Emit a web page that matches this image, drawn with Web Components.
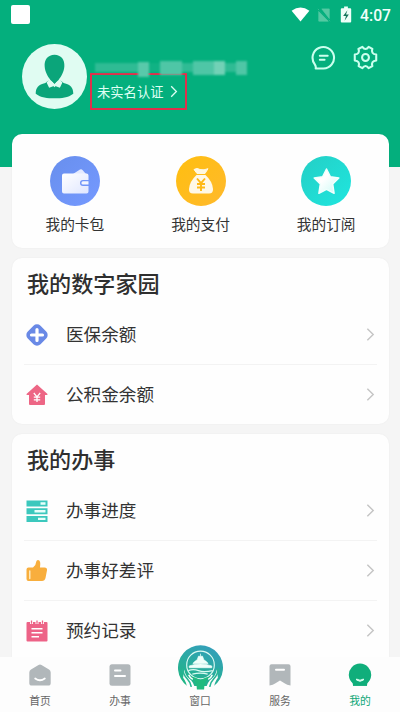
<!DOCTYPE html>
<html lang="zh-CN">
<head>
<meta charset="utf-8">
<title>我的</title>
<style>
html,body{margin:0;height:712px;overflow:hidden;background:#f5f5f5}
body{font-family:"Noto Sans CJK SC","Noto Sans",sans-serif;color:#333}
</style>
</head>
<body>
<my-app></my-app>
<script>
const define = (name, html) => customElements.define(name, class extends HTMLElement {
  constructor() {
    super();
    const t = document.createElement('template');
    t.innerHTML = html;
    this.attachShadow({mode: 'open'}).append(t.content.cloneNode(true));
  }
});

const icons = {
  wallet: ['0 0 50 50', `<defs><linearGradient id="a" x2="1" y2="1"><stop stop-color="#688fed"/><stop offset="1" stop-color="#7599ff"/></linearGradient><linearGradient id="b" x2="1" y2="1"><stop stop-color="#fff"/><stop offset="1" stop-color="#dfe6ff"/></linearGradient></defs><circle cx="25" cy="25" r="25" fill="url(#a)"/><path d="M23 18l7-4.500q1.500-.8 2.500.5l3.500 4z" fill="#e4eaff"/><path d="M14 17.500h22.500a2 2 0 0 1 2 2V24H33a3 3 0 0 0 0 6h5.500v5.500a2 2 0 0 1-2 2H14a2 2 0 0 1-2-2v-16a2 2 0 0 1 2-2z" fill="url(#b)"/><path d="M33 25.300h5.500v3.200H33a1.600 1.600 0 0 1 0-3.200z" fill="#f4f6ff"/>`],
  money: ['0 0 50 50', `<defs><linearGradient id="a" x2="1" y2="1"><stop stop-color="#ffbf10"/><stop offset="1" stop-color="#ffb92c"/></linearGradient></defs><circle cx="25" cy="25" r="25" fill="url(#a)"/><path d="M18 13.500q3-2 6 0 4 1 8-.8l-3 4.800h-8z" fill="#fff8e2" stroke="#fff8e2" stroke-linejoin="round"/><path d="M20.500 19h9q7 6.500 7.500 14 .2 4.500-4 4.500H17q-4.200 0-4-4.500.5-7.500 7.500-14z" fill="#fff8e8"/><path d="M21 22.500l4 4.700 4-4.700M25 27.200V35M21 28h8M21 31.500h8" fill="none" stroke="#ffb916" stroke-width="1.900"/>`],
  star: ['0 0 50 50', `<defs><linearGradient id="a" x2="1" y2="1"><stop stop-color="#24cfc5"/><stop offset="1" stop-color="#1fe6df"/></linearGradient><linearGradient id="b" x2="1" y2="1"><stop offset=".4" stop-color="#fff"/><stop offset="1" stop-color="#c9faf5"/></linearGradient></defs><circle cx="25" cy="25" r="25" fill="url(#a)"/><path d="M25.500 13l3.800 7.700 8.500 1.300-6.100 6 1.400 9.300-7.600-4-7.600 4 1.400-9.300-6.100-6 8.500-1.300z" fill="url(#b)" stroke="#f2fffd" stroke-width="1.500" stroke-linejoin="round"/>`],
  medical: ['0 0 24 24', `<rect x="3" y="3" width="18" height="18" rx="5" transform="rotate(45 12 12)" fill="#6989e6"/><path d="M12 6.500v11M6.500 12h11" stroke="#fff" stroke-width="3.200" stroke-linecap="round"/>`],
  house: ['0 0 24 24', `<path d="M12 1.500L22.500 11q.5 1-1 1h-1.500v9q0 1-1 1H5q-1 0-1-1v-9H2.500q-1.500 0-1-1z" fill="#ed6685"/><path d="M8.800 10l3.200 3.800 3.200-3.800M12 13.500V19M8.800 14.200h6.400M8.800 16.800h6.400" fill="none" stroke="#fff" stroke-width="1.300"/>`],
  progress: ['0 0 24 24', `<path d="M1.500 1.500h21v6h-21zM1.500 9.200h21v6h-21zM1.500 16.900h21v6h-21z" fill="#3cc8bd"/><path d="M15.500 3.300h5v2.400h-5zM9.500 11h11v2.400h-11zM13 18.700h7.500v2.400H13z" fill="#e6fffb"/>`],
  thumb: ['0 0 24 24', `<path d="M3.500 8.500H8q3-2 3.300-6 .2-1.500 1.700-1.500 3.200.3 2 7.500h4.500q2.800 0 2.500 2.800l-1.500 7.700q-.7 3-3.500 3H3.500q-2 0-2-2v-9.500q0-2 2-2z" fill="#f8ae3d"/><path d="M4.800 12v7.500" stroke="#fff1cc" stroke-width="1.300" stroke-linecap="round"/>`],
  note: ['0 0 24 24', `<path d="M2.500 3h19q1 0 1 1v17.500q0 1-1 1h-19q-1 0-1-1V4q0-1 1-1z" fill="#ed6387"/><path d="M6.500 1v4M12 1v4M17.500 1v4" stroke="#fff" stroke-width="3"/><path d="M6.500 1.500v3.300M12 1.500v3.300M17.500 1.500v3.300" stroke="#ed6387" stroke-width="1.300"/><path d="M6.500 9.700h11M6.500 13.700h11M6.500 17.700h7.500" stroke="#fff" stroke-width="1.500"/>`],
  chevron: ['0 0 10 16', `<path d="M1.500 1.500L8 8l-6.500 6.500" fill="none" stroke="currentColor" stroke-width="1.600"/>`],
  home: ['0 0 24 24', `<path d="M3 6.500l7.500-4.600q1.500-.9 3 0L21 6.500q1.700 1 1.700 3V20q0 2.600-2.600 2.600H3.900Q1.300 22.600 1.300 20V9.500q0-2 1.700-3z" fill="#b1b7ba"/><path d="M7.200 15.500q4.800 3.500 9.600 0" fill="none" stroke="#fff" stroke-width="1.800" stroke-linecap="round"/>`],
  doc: ['0 0 24 24', `<rect x="1.500" y="1.200" width="21" height="21.500" rx="2.500" fill="#b1b7ba"/><path d="M7 7.500h5.500M7 13h10" stroke="#fff" stroke-width="2" stroke-linecap="round"/>`],
  service: ['0 0 24 24', `<path d="M3.500 1.200h17q2 0 2 2v19.300q-3.500-.2-6-2.200L12 17.500l-4.500 2.800q-2.500 2-6 2.200V3.200q0-2 2-2z" fill="#b1b7ba"/><path d="M8 6.800h8" stroke="#fff" stroke-width="2" stroke-linecap="round"/>`],
  me: ['0 0 24 24', `<path d="M5 20.500A11.200 11.200 0 1 1 19 20.500V22.800H5z" fill="#10ae7b"/><path d="M4.500 18.500h15l-.5 4.300H5z" fill="#10ae7b"/><path d="M8.500 16q3.500 2.500 7 0v1q-3.500 2.500-7 0z" fill="#d8fff0" stroke="#d8fff0" stroke-linejoin="round"/>`],
  emblem: ['0 0 44 44', `<defs><linearGradient id="a" x1=".7" x2=".2" y2="1"><stop stop-color="#349fbb"/><stop offset="1" stop-color="#1fb783"/></linearGradient></defs><path d="M9 40A22 22 0 1 1 35 40z" fill="url(#a)"/><circle cx="22" cy="19.500" r="13.500" fill="none" stroke="#dffbf4" stroke-width="1.100"/><path d="M22 8.500v2.500M20 11h4l1 3h-6zM14.500 18q4-4.500 7.500-4.500t7.500 4.500zM11 20.500q11-4 22 0v1.700H11z" fill="#effffb" stroke="#effffb" stroke-width=".7"/><path d="M10 25q5-2 10 0t14 0M14 28.500q8-2 15 0" fill="none" stroke="#d8fbf1" stroke-width="1.300"/><path d="M6 24q1 6 5 9 4.500 3 6 11H9q0-7-4-12zM38 24q-1 6-5 9-4.500 3-6 11h8q0-7 4-12z" fill="#fdfdfd"/><path d="M4.500 23q.5 6 4.500 10 3 3 4 8M39.500 23q-.5 6-4.500 10-3 3-4 8" fill="none" stroke="#26b693" stroke-width="1.600"/><path d="M10.500 29q1 3 4 4.500M33.500 29q-1 3-4 4.500" fill="none" stroke="#fff" stroke-width="1.500"/><path d="M13 31q6 1 9 3.500 3-2.500 9-3.500-5.500 5-5.500 12.500h-7Q18.500 36 13 31z" fill="#21ba7f"/>`],
  avatar: ['0 0 64 64', `<circle cx="32" cy="32" r="32" fill="#e0fcf2"/><path d="M32 10.500c6.500 0 10.200 5 9.700 11.500-.4 6-3.200 10-5.700 13.500l-4 3.500-4-3.500c-2.500-3.500-5.300-7.500-5.700-13.500C21.800 15.500 25.500 10.500 32 10.500z" fill="#0ba57a"/><path d="M26 36l6 6.500 6-6.500 3 2.500c7 1.500 9.500 5 9.500 10.500-5 4-11.500 4.500-18.500 4.500S18.500 53 13.500 49c0-5.500 2.500-9 9.500-10.500z" fill="#0ba57a"/><path d="M26.500 35.500L32 41.500l5.500-6 2.300 2.500-2.500 5-5.300-2-5.300 2-2.500-5z" fill="#e0fcf2"/><path d="M28.500 35h7L32 39.500z" fill="#0ba57a"/>`],
  chat: ['0 0 24 24', `<path d="M4.500 22.500q.5-2-1-4.200A10.300 10.300 0 1 1 12 22.500zM8.500 10.300h7.500M8.500 14.200h4.500" fill="none" stroke="#cbffee" stroke-width="2" stroke-linejoin="round" stroke-linecap="round"/>`],
  gear: ['0 0 24 24', `<path d="M9 1.800q1.400 2 3 2t3-2l3.600 2q-.8 2.200.1 3.600t3.600 1.800v5.600q-2.700.4-3.600 1.800t-.1 3.600l-3.600 2q-1.400-2-3-2t-3 2l-3.600-2q.8-2.200-.1-3.600t-3.600-1.800V9.200q2.700-.4 3.600-1.800t-.1-3.600z" fill="none" stroke="#cbffee" stroke-width="2" stroke-linejoin="round"/><circle cx="12" cy="12" r="3.300" fill="none" stroke="#cbffee" stroke-width="2"/>`],
  wifi: ['0 0 20 16', `<path d="M.5 4Q10-3 19.500 4L10 15.500z" fill="#fff"/>`],
  nosim: ['0 0 14 16', `<path d="M4.500 1H13v11zM1 4l11 11H1zM0 1l14 14" fill="#54c9a3" stroke="#54c9a3" stroke-width=".8"/><path d="M1 2l12 12.500" stroke="#04ae7d" stroke-width="1.200"/>`],
  battery: ['0 0 12 18', `<path d="M4 .5h4v2h2.500q1 0 1 1v13q0 1-1 1h-9q-1 0-1-1v-13q0-1 1-1H4z" fill="#eefff9"/><path d="M7.500 4.500L3 10.500h3L4.500 15.500 9 9H6z" fill="#14755b"/>`]
};

customElements.define('app-icon', class extends HTMLElement {
  connectedCallback() {
    if (this.shadowRoot) return;
    const [box, art] = icons[this.getAttribute('name')];
    this.attachShadow({mode: 'open'}).innerHTML =
      `<style>:host{display:block;flex:none}svg{display:block;width:100%;height:100%}</style><svg viewBox="${box}">${art}</svg>`;
  }
});

define('status-bar', `<style>
:host{display:flex;align-items:center;height:29px;padding:0 9px 0 11px;color:#f1fffa;font:500 15.700px/29px Roboto,sans-serif}
i{width:19px;height:19px;background:#fff;border-radius:2px;margin-right:auto}
span{padding-top:1px}
.w{width:19px;height:15px;margin-right:7px}.s{width:14px;height:14px;margin-right:9px}.b{width:12px;height:17px;margin-right:8px}
</style><i></i><app-icon class="w" name="wifi"></app-icon><app-icon class="s" name="nosim"></app-icon><app-icon class="b" name="battery"></app-icon><span>4:07</span>`);

define('profile-bar', `<style>
:host{display:flex;height:105px;padding:0 22px 0 22px}
.av{width:65px;height:65px;margin-top:15px}
.info{margin:30px auto 0 3px}
.mask{display:flex;align-items:flex-start;height:14px;width:152px;margin-left:5px;filter:blur(1px)}
.mask i{flex:1;height:9px;margin-top:4px;background:#2fbb94}
.mask .b{height:15px;margin-top:3px;background:#58c9aa}
.mask .g{background:#10b284}
.mask .m{height:14px;margin-top:2px;background:#4fc6a6}
.mask .l{height:14px;margin-top:2px;background:#72d1b6}
.verify{box-sizing:border-box;display:flex;align-items:center;width:97px;height:37px;border:2px solid #df304c;padding-left:5px;color:#dffff4;font-size:13.300px;white-space:nowrap}
.verify app-icon{width:8px;height:13px;margin-left:7px}
.c,.s{width:25px;height:25px;margin-top:16px}.c{margin-right:17px}
</style><app-icon class="av" name="avatar"></app-icon>
<div class="info"><div class="mask"><i></i><i></i><i></i><i></i><i class="b"></i><i class="g"></i><i class="m"></i><i class="m"></i><i></i><i class="m"></i><i class="m"></i><i class="l"></i><i></i><i class="m"></i></div><div class="verify"><span>未实名认证</span><app-icon name="chevron"></app-icon></div></div>
<app-icon class="c" name="chat"></app-icon><app-icon class="s" name="gear"></app-icon>`);

define('page-card', `<style>:host{display:block;box-sizing:border-box;background:#fefefe;border-radius:10px;margin:0 11px 10px 12px;box-shadow:0 0 2px #0000000d}</style><slot></slot>`);

customElements.define('quick-link', class extends HTMLElement {
  connectedCallback() {
    if (this.shadowRoot) return;
    this.attachShadow({mode: 'open'}).innerHTML = `<style>
:host{display:flex;flex-direction:column;align-items:center;flex:1;font-size:14.700px;line-height:22px;color:#333}
app-icon{width:50px;height:50px;margin-bottom:7px}</style><app-icon name="${this.getAttribute('icon')}"></app-icon><span><slot></slot></span>`;
  }
});

define('card-title', `<style>:host{display:block;box-sizing:border-box;height:47px;padding:2px 15px 0;font-size:22.100px;line-height:45px;font-weight:500;color:#2f2f2f}</style><slot></slot>`);

customElements.define('list-row', class extends HTMLElement {
  connectedCallback() {
    if (this.shadowRoot) return;
    this.attachShadow({mode: 'open'}).innerHTML = `<style>
:host{display:flex;align-items:center;box-sizing:border-box;height:60px;margin:0 12px;padding:0 2px 0 1px;border-bottom:1px solid #f3f3f3;font-size:17.600px;line-height:26px;color:#333}
:host(:last-child){border-bottom-color:transparent}
.i{width:24px;height:24px;margin-right:17px}
span{padding-bottom:2px}
.c{width:9px;height:15px;margin-left:auto;color:#c5c5c5}</style><app-icon class="i" name="${this.getAttribute('icon')}"></app-icon><span><slot></slot></span><app-icon class="c" name="chevron"></app-icon>`;
  }
});

customElements.define('tab-item', class extends HTMLElement {
  connectedCallback() {
    if (this.shadowRoot) return;
    this.attachShadow({mode: 'open'}).innerHTML = `<style>
:host{display:flex;flex-direction:column;align-items:center;justify-content:flex-end;flex:1;height:55px;padding-bottom:4px;box-sizing:border-box;font-size:10.800px;line-height:16px;color:#666}
:host([active]){color:#10a777}
app-icon{width:24px;height:24px;margin-bottom:5px}
:host([large]) app-icon{width:45px;height:45px;margin-bottom:2px}</style><app-icon name="${this.getAttribute('icon')}"></app-icon><span><slot></slot></span>`;
  }
});

define('tab-bar', `<style>:host{display:flex;height:55px;background:#fdfdfd;position:absolute;left:0;right:0;bottom:0}</style><slot></slot>`);

define('my-app', `<style>
:host{display:block;position:relative;width:400px;height:712px;overflow:hidden;background:linear-gradient(#04af7d 167px,#f5f5f5 167px)}
.quick{display:flex;height:114px;box-sizing:border-box;padding:22px 0 0}
.last{height:260px}
.home{height:166px}
</style>
<status-bar></status-bar><profile-bar></profile-bar>
<page-card><div class="quick"><quick-link icon="wallet">我的卡包</quick-link><quick-link icon="money">我的支付</quick-link><quick-link icon="star">我的订阅</quick-link></div></page-card>
<page-card class="home"><card-title>我的数字家园</card-title><list-row icon="medical">医保余额</list-row><list-row icon="house">公积金余额</list-row></page-card>
<page-card class="last"><card-title>我的办事</card-title><list-row icon="progress">办事进度</list-row><list-row icon="thumb">办事好差评</list-row><list-row icon="note">预约记录</list-row></page-card>
<tab-bar><tab-item icon="home">首页</tab-item><tab-item icon="doc">办事</tab-item><tab-item icon="emblem" large>窗口</tab-item><tab-item icon="service">服务</tab-item><tab-item icon="me" active>我的</tab-item></tab-bar>`);
</script>
</body>
</html>
